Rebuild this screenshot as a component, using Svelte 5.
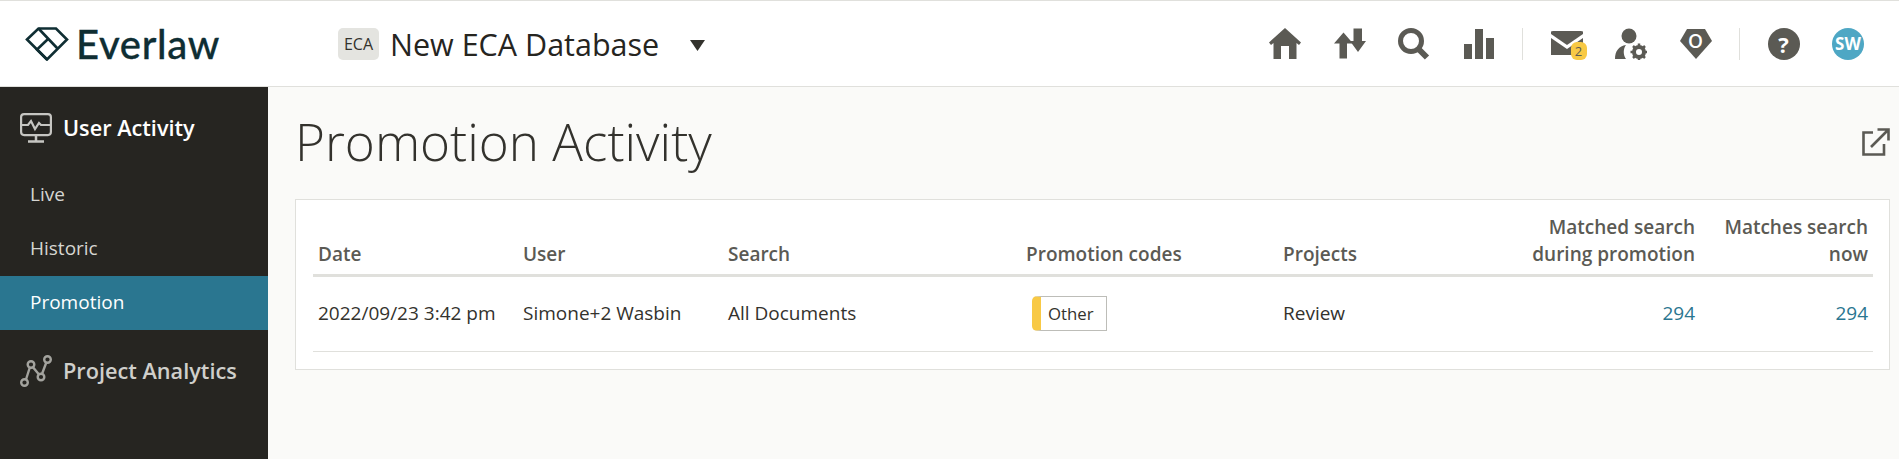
<script lang="ts">
  const headers = ['Date', 'User', 'Search', 'Promotion codes', 'Projects'];
</script>

<div class="page">
  <header class="topbar">
    <div class="brand">
      <svg class="logo" viewBox="0 0 44 34" fill="none" stroke="#0f2e33" stroke-width="2.6" stroke-linejoin="miter">
        <path d="M2 12.500 13.500 1.500H31L42 12.500 22 32.500Z"></path>
        <path d="M13.500 1.500 32.500 21.500M22 32.500 12 22.500 22.500 12.500"></path>
      </svg>
      <span class="wordmark">Everlaw</span>
    </div>
    <div class="project">
      <span class="project-badge">ECA</span>
      <span class="project-name">New ECA Database</span>
      <svg class="caret" viewBox="0 0 15 11"><path d="M0 0H15L7.500 11Z" fill="#33322d"></path></svg>
    </div>
    <nav class="nav">
      <svg class="nav-icon" viewBox="0 0 32 32" fill="#5b5a54">
        <path d="M16 0 32 14.500 30 17 27.500 15V31H20V18H12V31H4.500V15L2 17 0 14.500Z"></path>
      </svg>
      <svg class="nav-icon" viewBox="0 0 32 32" fill="#5b5a54">
        <path d="M9.500 4.500 19 15.500H13V30.500H5.500V15.500H0Z"></path>
        <path d="M19.500 0.500H28V13H32L24 24 16 13H19.500Z"></path>
      </svg>
      <svg class="nav-icon" viewBox="0 0 32 32" fill="none" stroke="#5b5a54">
        <circle cx="13" cy="13" r="10.500" stroke-width="5"></circle>
        <path d="M20.500 21 29 29.500" stroke-width="6"></path>
      </svg>
      <svg class="nav-icon" viewBox="0 0 32 32" fill="#5b5a54">
        <rect x="1" y="16" width="8" height="15"></rect>
        <rect x="12" y="1" width="8" height="30"></rect>
        <rect x="23" y="10" width="8" height="21"></rect>
      </svg>
      <span class="divider"></span>
      <div class="mail">
        <svg class="nav-icon" viewBox="0 0 32 32" fill="#5b5a54">
          <path d="M0 3.500 2 3H30L32 3.500V6L16 17 0 6Z"></path>
          <path d="M0 10 16 21 32 10V27H0Z"></path>
        </svg>
        <span class="mail-count">2</span>
      </div>
      <svg class="nav-icon" viewBox="0 0 32 32" fill="#5b5a54">
        <circle cx="14" cy="8" r="7.500"></circle>
        <path d="M0 31C0 23 4 18 11 17 8 21 8 27 11 31Z"></path>
        <circle cx="24" cy="24" r="5" fill="none" stroke="#5b5a54" stroke-width="4"></circle>
        <path d="M24 15.500V32.500M15.500 24H32.500M18 18 30 30M30 18 18 30" stroke="#5b5a54" stroke-width="2.500" stroke-dasharray="3 11 3 0"></path>
      </svg>
      <div class="points">
        <svg class="nav-icon" viewBox="0 0 32 32" fill="#5b5a54">
          <path d="M7 1H25L32 13 16 31 0 13Z"></path>
        </svg>
        <span class="points-count">O</span>
      </div>
      <span class="divider"></span>
      <div class="help">?</div>
      <div class="avatar">SW</div>
    </nav>
  </header>

  <div class="body">
    <aside class="sidebar">
      <div class="section active-section">
        <svg class="section-icon" viewBox="0 0 32 30" fill="none" stroke="#c6c6c2" stroke-width="2.200">
          <rect x="1.100" y="1.100" width="29.800" height="21" rx="3"></rect>
          <path d="M1 12H8L11 8 15 16 19 10 21 12H31"></path>
          <path d="M16 23V28M8 28.500H24" stroke-width="2.500"></path>
        </svg>
        <span>User Activity</span>
      </div>
      <a class="item" href="#live">Live</a>
      <a class="item" href="#historic">Historic</a>
      <a class="item selected" href="#promotion">Promotion</a>
      <div class="section">
        <svg class="section-icon" viewBox="0 0 32 32" fill="none" stroke="#a3a39e" stroke-width="2.400">
          <circle cx="4.500" cy="27.500" r="3.300"></circle>
          <circle cx="11" cy="9.500" r="3.300"></circle>
          <circle cx="21" cy="22" r="3.300"></circle>
          <circle cx="27.500" cy="4.500" r="3.300"></circle>
          <path d="M6 24.500 9.800 12.500M12.800 12 19 19.500M22 19 26.300 7.500"></path>
        </svg>
        <span>Project Analytics</span>
      </div>
    </aside>

    <main class="main">
      <div class="title-row">
        <h1>Promotion Activity</h1>
        <svg class="popout" viewBox="0 0 28 28" fill="none" stroke="#5b5a54" stroke-width="2.600">
          <path d="M11 4.500H1.500V26.500H22V16"></path>
          <path d="M9 19 26 2M15.500 1.500H26.500V12.500"></path>
        </svg>
      </div>

      <section class="card">
        <table>
          <colgroup>
            <col class="col-date" />
            <col class="col-user" />
            <col class="col-search" />
            <col class="col-codes" />
            <col class="col-projects" />
            <col class="col-matched" />
            <col class="col-now" />
          </colgroup>
          <thead>
            <tr>
              {#each headers as h}
                <th>{h}</th>
              {/each}
              <th class="num">Matched search<br />during promotion</th>
              <th class="num">Matches search<br />now</th>
            </tr>
          </thead>
          <tbody>
            <tr>
              <td>2022/09/23 3:42 pm</td>
              <td>Simone+2 Wasbin</td>
              <td>All Documents</td>
              <td><span class="tag">Other</span></td>
              <td>Review</td>
              <td class="num"><a href="#matched">294</a></td>
              <td class="num"><a href="#now">294</a></td>
            </tr>
          </tbody>
        </table>
      </section>
    </main>
  </div>
</div>

<style>
  :global(body) {
    margin: 0;
    font-family: "Open Sans", "Liberation Sans", sans-serif;
    color: #33322d;
  }

  .page {
    height: 459px;
    display: flex;
    flex-direction: column;
    overflow: hidden;
  }

  .topbar {
    height: 85px;
    flex-shrink: 0;
    display: flex;
    align-items: center;
    background: #fff;
    border-top: 1px solid #e0e0dc;
    border-bottom: 1px solid #e0e0dc;
  }

  .brand {
    display: flex;
    align-items: center;
    gap: 7px;
    margin-left: 25px;
    width: 313px;
  }

  .logo {
    width: 44px;
    height: 34px;
    flex-shrink: 0;
  }

  .wordmark {
    font-family: Lato, sans-serif;
    font-size: 40px;
    font-weight: 500;
    letter-spacing: 0.7px;
    -webkit-text-stroke: 0.3px #0f2e33;
    color: #0f2e33;
  }

  .project {
    display: flex;
    align-items: center;
  }

  .project-badge {
    width: 41px;
    height: 32px;
    display: flex;
    align-items: center;
    justify-content: center;
    background: #e4e4e0;
    border-radius: 5px;
    font-size: 16px;
    margin-right: 11px;
  }

  .project-name {
    font-size: 30.500px;
    font-weight: 500;
    color: #26251f;
  }

  .caret {
    width: 15px;
    height: 11px;
    margin-left: 31px;
    margin-top: 3px;
  }

  .nav {
    margin-left: auto;
    margin-right: 35px;
    display: flex;
    align-items: center;
    gap: 32.500px;
  }

  .nav-icon {
    width: 32px;
    height: 32px;
    display: block;
  }

  .divider {
    width: 1px;
    height: 32px;
    background: #e0e0dc;
    margin: 0 -5px;
  }

  .mail,
  .points {
    position: relative;
    width: 32px;
    height: 32px;
  }

  .mail-count {
    position: absolute;
    right: -4px;
    bottom: 0;
    width: 16px;
    height: 18px;
    border-radius: 6px;
    background: #f8c945;
    color: #5b5a54;
    font-size: 13px;
    line-height: 18px;
    text-align: center;
  }

  .points-count {
    position: absolute;
    left: 0;
    right: 0;
    top: 3px;
    text-align: center;
    color: #fff;
    font-size: 19px;
    font-weight: 600;
    line-height: 20px;
  }

  .help,
  .avatar {
    width: 32px;
    height: 32px;
    border-radius: 50%;
    display: flex;
    align-items: center;
    justify-content: center;
    color: #fff;
    font-weight: 700;
  }

  .help {
    background: #5b5a54;
    font-size: 22px;
  }

  .avatar {
    background: #4ea7c4;
    font-size: 17px;
  }

  .body {
    flex: 1;
    display: flex;
    min-height: 0;
  }

  .sidebar {
    width: 268px;
    flex-shrink: 0;
    background: #262521;
    display: flex;
    flex-direction: column;
  }

  .section {
    height: 81px;
    display: flex;
    align-items: center;
    gap: 11px;
    padding-left: 20px;
    font-size: 21.700px;
    font-weight: 600;
    color: #cfcfcb;
  }

  .section.active-section {
    height: 81px;
    color: #fff;
  }

  .section-icon {
    width: 32px;
    height: 32px;
    flex-shrink: 0;
  }

  .item {
    height: 54px;
    box-sizing: border-box;
    display: flex;
    align-items: center;
    padding: 0 0 3px 30px;
    font-size: 19px;
    color: #d6d6d2;
    text-decoration: none;
  }

  .item.selected {
    background: #2a7690;
    color: #fff;
  }

  .main {
    flex: 1;
    min-width: 0;
    background: #fafaf8;
    padding: 22px 9px 0 27px;
  }

  .title-row {
    display: flex;
    align-items: center;
    justify-content: space-between;
    height: 65px;
    margin-bottom: 25px;
  }

  h1 {
    margin: 0;
    font-size: 51.200px;
    font-weight: 300;
    line-height: 65px;
    color: #33322d;
  }

  .popout {
    width: 28px;
    height: 28px;
  }

  .card {
    background: #fff;
    border: 1px solid #e0e0dc;
    padding: 14px 16px 17px 17px;
  }

  table {
    width: 1560px;
    table-layout: fixed;
    border-collapse: collapse;
    font-size: 19px;
  }

  .col-date,
  .col-user {
    width: 205px;
  }

  .col-search {
    width: 298px;
  }

  .col-codes {
    width: 257px;
  }

  .col-projects {
    width: 200px;
  }

  .col-matched {
    width: 222px;
  }

  .col-now {
    width: 173px;
  }

  th {
    text-align: left;
    vertical-align: bottom;
    font-weight: 600;
    font-size: 19px;
    line-height: 27px;
    color: #5b5a54;
    padding: 0 5px 6px;
    border-bottom: 3px solid #e0e0dc;
  }

  td {
    height: 72px;
    padding: 0 5px 2px;
    border-bottom: 1px solid #e0e0dc;
    color: #33322d;
    white-space: nowrap;
  }

  .num {
    text-align: right;
  }

  td a {
    color: #2a7690;
    text-decoration: none;
  }

  .tag {
    display: inline-flex;
    align-items: center;
    height: 33px;
    padding: 0 12px 0 7px;
    margin-left: 6px;
    background: #fff;
    border: 1px solid #bdbdb8;
    border-left: 9px solid #f8c945;
    border-radius: 5px 0 0 5px;
    font-size: 16.800px;
    color: #33322d;
  }
</style>
